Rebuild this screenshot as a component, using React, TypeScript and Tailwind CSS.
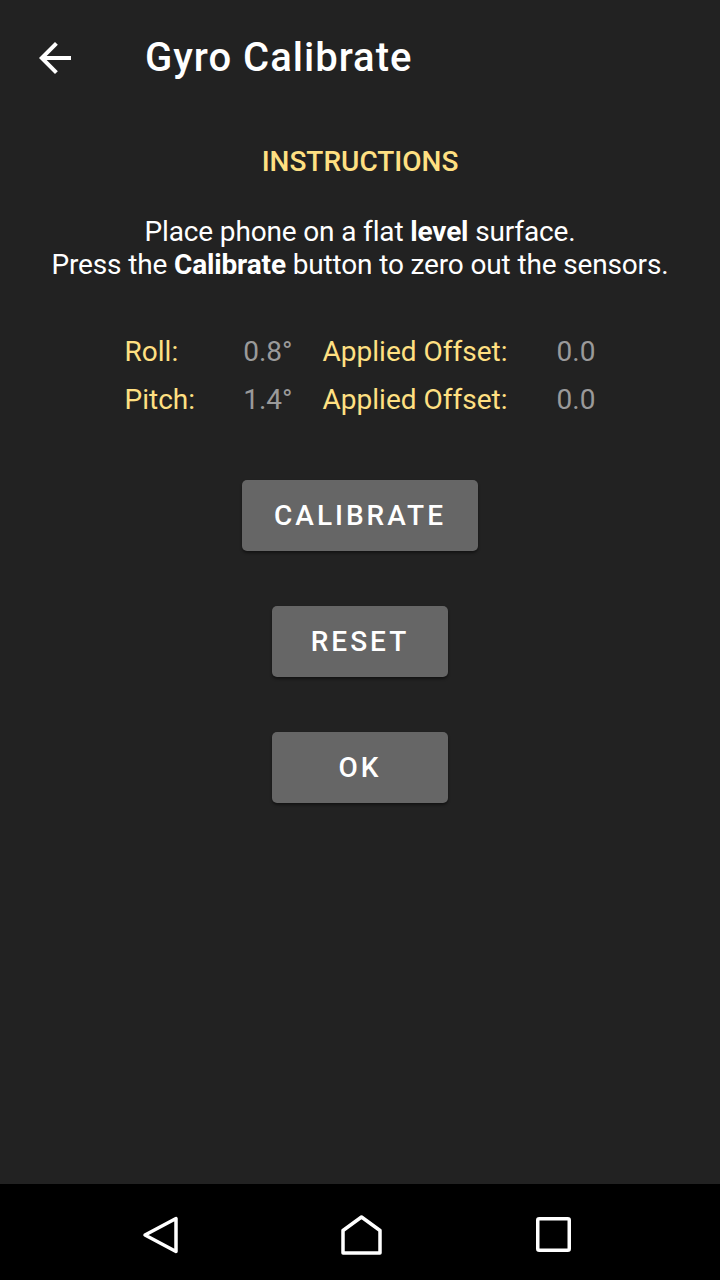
import React from "react";

export default function App() {
  const rows = [
    { label: "Roll:", value: "0.8°", offset: "0.0" },
    { label: "Pitch:", value: "1.4°", offset: "0.0" },
  ];
  return (
    <div className="w-[720px] h-[1280px] bg-[#222222] flex flex-col font-['Roboto',sans-serif] text-white">
      <div className="h-[112px] flex items-center shrink-0 pt-[4px]">
        <div className="w-[110px] pl-[31px] flex items-center">
          <svg width="48" height="48" viewBox="0 0 24 24" fill="#ffffff">
            <path d="M20 11H7.83l5.59-5.59L12 4l-8 8 8 8 1.41-1.41L7.83 13H20v-2z" />
          </svg>
        </div>
        <div className="ml-[35px] text-[40px] font-medium tracking-[1px] leading-none">Gyro Calibrate</div>
      </div>
      <div className="flex-1 flex flex-col items-center">
        <div className="mt-[33px] text-[28px] leading-[33px] font-medium text-[#FFE082]">INSTRUCTIONS</div>
        <div className="mt-[37px] text-[28px] leading-[33px] text-center text-white tracking-[-0.15px]">
          Place phone on a flat <span className="font-bold">level</span> surface.
          <br />
          Press the <span className="font-bold">Calibrate</span> button to zero out the sensors.
        </div>
        <div className="mt-[54px] flex flex-col gap-[15px] text-[28px] leading-[33px]">
          {rows.map((r) => (
            <div key={r.label} className="flex">
              <div className="w-[110px] text-[#FFE082]">{r.label}</div>
              <div className="w-[58px] text-right text-[#9a9a9a]">{r.value}</div>
              <div className="ml-[30px] w-[200px] text-[#FFE082]">Applied Offset:</div>
              <div className="ml-[34px] text-[#9a9a9a]">{r.offset}</div>
            </div>
          ))}
        </div>
        <button className="mt-[64px] w-[236px] h-[71px] rounded-[5px] bg-[#666666] shadow-[0_2px_3px_rgba(0,0,0,0.45)] text-[28px] font-medium tracking-[3px] text-white">
          CALIBRATE
        </button>
        <button className="mt-[55px] w-[176px] h-[71px] rounded-[5px] bg-[#666666] shadow-[0_2px_3px_rgba(0,0,0,0.45)] text-[28px] font-medium tracking-[3px] text-white">
          RESET
        </button>
        <button className="mt-[55px] w-[176px] h-[71px] rounded-[5px] bg-[#666666] shadow-[0_2px_3px_rgba(0,0,0,0.45)] text-[28px] font-medium tracking-[3px] text-white">
          OK
        </button>
      </div>
      <div className="h-[96px] bg-black flex items-center shrink-0 pl-[141px] pt-[5px]">
        <svg width="38" height="40" viewBox="0 0 38 40">
          <path d="M35 3.5 L35 36.5 L4 20 Z" fill="none" stroke="#fff" strokeWidth="3.5" strokeLinejoin="round" />
        </svg>
        <svg width="41" height="40" viewBox="0 0 41 40" className="ml-[162px]">
          <path d="M2 15.5 L20.5 2 L39 15.5 L39 38 L2 38 Z" fill="none" stroke="#fff" strokeWidth="3.5" strokeLinejoin="round" />
        </svg>
        <svg width="35" height="35" viewBox="0 0 35 35" className="ml-[154px]">
          <rect x="1.75" y="1.75" width="31.5" height="31.5" rx="1.5" fill="none" stroke="#fff" strokeWidth="3.5" />
        </svg>
      </div>
    </div>
  );
}
